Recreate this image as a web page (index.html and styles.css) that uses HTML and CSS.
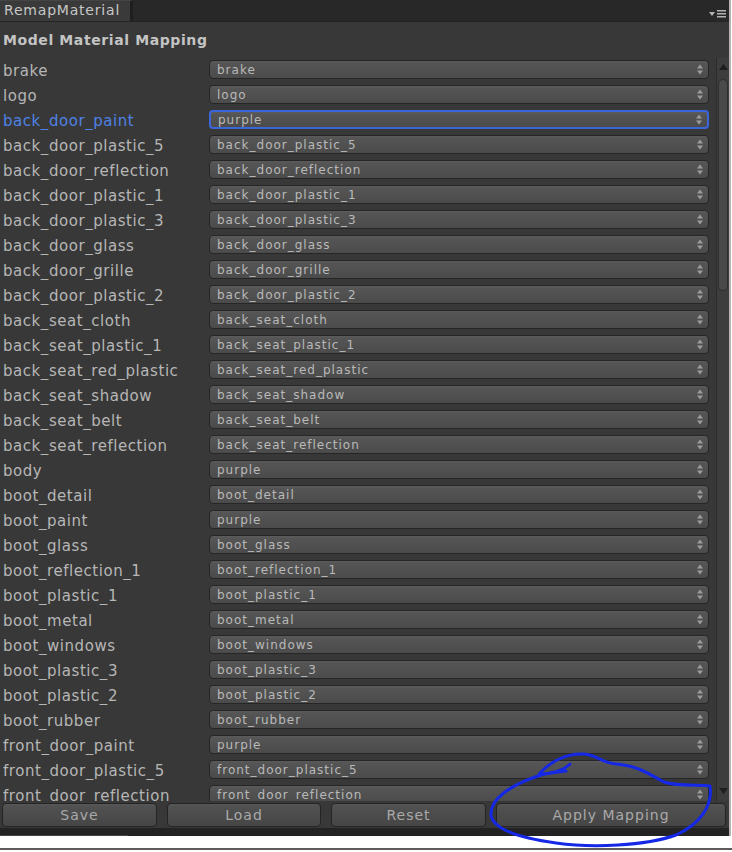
FILE: index.html
```html
<!DOCTYPE html>
<html>
<head>
<meta charset="utf-8">
<link rel="stylesheet" href="styles.css">
</head>
<body>
<div class="frame">
  <div class="window">
    <div class="tabbar">
      <div class="tab">RemapMaterial</div>
      <div class="tabmenu">
        <svg width="20" height="10" viewBox="0 0 20 10">
          <polygon points="1,3 7,3 4,7" fill="#b4b4b4"/>
          <rect x="9" y="1" width="9" height="1.5" fill="#b4b4b4"/>
          <rect x="9" y="4" width="9" height="1.5" fill="#b4b4b4"/>
          <rect x="9" y="7" width="9" height="1.5" fill="#b4b4b4"/>
        </svg>
      </div>
    </div>
    <div class="content">
      <div class="heading">Model Material Mapping</div>
      <div class="scrollarea">
        <div class="list" id="list"></div>
        <div class="scrollbar">
          <div class="arrow">
            <svg width="9" height="6" viewBox="0 0 9 6"><polygon points="0,6 9,6 4.5,0" fill="#1e1e1e"/></svg>
          </div>
          <div class="track">
            <div class="thumb"></div>
          </div>
          <div class="arrow">
            <svg width="9" height="6" viewBox="0 0 9 6"><polygon points="0,0 9,0 4.5,6" fill="#1e1e1e"/></svg>
          </div>
        </div>
      </div>
    </div>
    <div class="footer">
      <button class="btn w-save">Save</button>
      <button class="btn w-load">Load</button>
      <button class="btn w-reset">Reset</button>
      <button class="btn w-apply">Apply Mapping</button>
    </div>
    <div class="strip"><div class="strip-tab"></div></div>
  </div>
  <div class="edge"></div>
</div>
<div class="whitearea"></div>
<div class="bottomline"></div>

<svg class="scribble" width="732" height="852" viewBox="0 0 732 852">
  <path d="M570,764 C563,771 550,774 539,774 C549,763 565,753 584,754 C598,755 601,763 616,764 C640,766 650,775 664,782 C680,787 700,784 710,786 C713,806 700,824 676,835 C645,846 592,848 556,843 C520,838 493,830 491,815 C490,799 510,785 541,775 C552,772 560,772 566,771"
        fill="none" stroke="#1428e6" stroke-width="3" stroke-linecap="round" stroke-linejoin="round"/>
</svg>

<script src="app.js"></script>
</body>
</html>
```

FILE: app.js
```js
var rows = [
  ["brake","brake"],["logo","logo"],["back_door_paint","purple",true],
  ["back_door_plastic_5","back_door_plastic_5"],["back_door_reflection","back_door_reflection"],
  ["back_door_plastic_1","back_door_plastic_1"],["back_door_plastic_3","back_door_plastic_3"],
  ["back_door_glass","back_door_glass"],["back_door_grille","back_door_grille"],
  ["back_door_plastic_2","back_door_plastic_2"],["back_seat_cloth","back_seat_cloth"],
  ["back_seat_plastic_1","back_seat_plastic_1"],["back_seat_red_plastic","back_seat_red_plastic"],
  ["back_seat_shadow","back_seat_shadow"],["back_seat_belt","back_seat_belt"],
  ["back_seat_reflection","back_seat_reflection"],["body","purple"],["boot_detail","boot_detail"],
  ["boot_paint","purple"],["boot_glass","boot_glass"],["boot_reflection_1","boot_reflection_1"],
  ["boot_plastic_1","boot_plastic_1"],["boot_metal","boot_metal"],["boot_windows","boot_windows"],
  ["boot_plastic_3","boot_plastic_3"],["boot_plastic_2","boot_plastic_2"],["boot_rubber","boot_rubber"],
  ["front_door_paint","purple"],["front_door_plastic_5","front_door_plastic_5"],
  ["front_door_reflection","front_door_reflection"]
];
var list = document.getElementById("list");
var arrow = '<svg class="updown" width="6" height="11" viewBox="0 0 6 11"><polygon points="0,4.5 6,4.5 3,0.5" fill="#9c9c9c"/><polygon points="0,6.5 6,6.5 3,10.5" fill="#9c9c9c"/></svg>';
rows.forEach(function (r) {
  var row = document.createElement("div");
  row.className = "row" + (r[2] ? " active" : "");
  row.innerHTML = '<div class="label">' + r[0] + '</div><div class="dropdown"><span class="dtext">' + r[1] + '</span>' + arrow + '</div>';
  list.appendChild(row);
});
```

FILE: styles.css
```css
html, body {
  margin: 0;
  padding: 0;
  background: #ffffff;
  width: 732px;
  height: 852px;
  overflow: hidden;
  font-family: "DejaVu Sans", Verdana, sans-serif;
}
.frame {
  display: flex;
  height: 836px;
}
.window {
  width: 729px;
  display: flex;
  flex-direction: column;
  background: #383838;
}
.edge {
  width: 2px;
  background: #b4b4b4;
}
.tabbar {
  height: 21px;
  background: #282828;
  border-bottom: 1px solid #232323;
  display: flex;
  align-items: stretch;
  justify-content: space-between;
}
.tab {
  width: 126px;
  background: #3a3a3a;
  border-right: 3px solid #1f1f1f;
  border-top: 1px solid #444;
  color: #c6c6c6;
  font-size: 14px;
  letter-spacing: 0.8px;
  padding-left: 4px;
  line-height: 19px;
}
.tabmenu {
  display: flex;
  align-items: center;
  padding-top: 6px;
  padding-right: 1px;
}
.content {
  flex: 1;
  display: flex;
  flex-direction: column;
  min-height: 0;
}
.heading {
  height: 36px;
  line-height: 36px;
  padding-left: 3px;
  font-weight: bold;
  font-size: 14px;
  letter-spacing: 0.6px;
  color: #c4c4c4;
}
.scrollarea {
  flex: 1;
  display: flex;
  min-height: 0;
  overflow: hidden;
}
.list {
  width: 716px;
  overflow: hidden;
}
.row {
  height: 25px;
  display: flex;
  align-items: center;
}
.label {
  width: 206px;
  padding-left: 3px;
  padding-top: 1px;
  font-size: 15px;
  letter-spacing: 0.55px;
  color: #b6b6b6;
  white-space: nowrap;
  overflow: hidden;
}
.row.active .label {
  color: #4f82e6;
}
.dropdown {
  width: 486px;
  height: 17px;
  margin-top: -2px;
  border: 1px solid #262626;
  border-radius: 4px;
  background: linear-gradient(#5c5c5c 0, #555555 2px, #4b4b4b 100%);
  display: flex;
  align-items: center;
  justify-content: space-between;
  padding-left: 7px;
  padding-right: 5px;
  box-sizing: content-box;
}
.row.active .dropdown {
  border: 2px solid #3a66dc;
  height: 15px;
  width: 484px;
}
.dtext {
  font-size: 12px;
  letter-spacing: 1px;
  color: #b9b9b9;
  white-space: nowrap;
}
.updown {
  display: block;
}
.scrollbar {
  width: 12px;
  border-left: 1px solid #2c2c2c;
  background: #3d3d3d;
  display: flex;
  flex-direction: column;
  margin-top: -1px;
}
.arrow {
  height: 20px;
  display: flex;
  align-items: center;
  justify-content: center;
}
.track {
  flex: 1;
  padding: 2px 1px;
}
.thumb {
  height: 210px;
  border-radius: 5px;
  background: #4a4a4a;
  border: 1px solid #2e2e2e;
}
.footer {
  height: 27px;
  box-sizing: border-box;
  padding: 2px 0 1px 2px;
  display: flex;
  gap: 10px;
  background: #383838;
}
.btn {
  height: 24px;
  border: 1px solid #242424;
  border-radius: 4px;
  background: linear-gradient(#575757 0, #505050 3px, #464646 100%);
  color: #a9a9a9;
  font-family: "DejaVu Sans", Verdana, sans-serif;
  font-size: 14px;
  letter-spacing: 1px;
  padding: 0;
  margin: 0;
}
.w-save { width: 155px; }
.w-load { width: 154px; }
.w-reset { width: 155px; }
.w-apply { width: 230px; }
.strip {
  height: 8px;
  background: #232323;
  display: flex;
  align-items: flex-end;
}
.strip-tab {
  width: 128px;
  height: 1px;
  background: #444;
}
.whitearea {
  height: 12px;
  background: #ffffff;
}
.bottomline {
  height: 2px;
  background: #5c5c5c;
}
.scribble {
  position: absolute;
  left: 0;
  top: 0;
  pointer-events: none;
}
```
